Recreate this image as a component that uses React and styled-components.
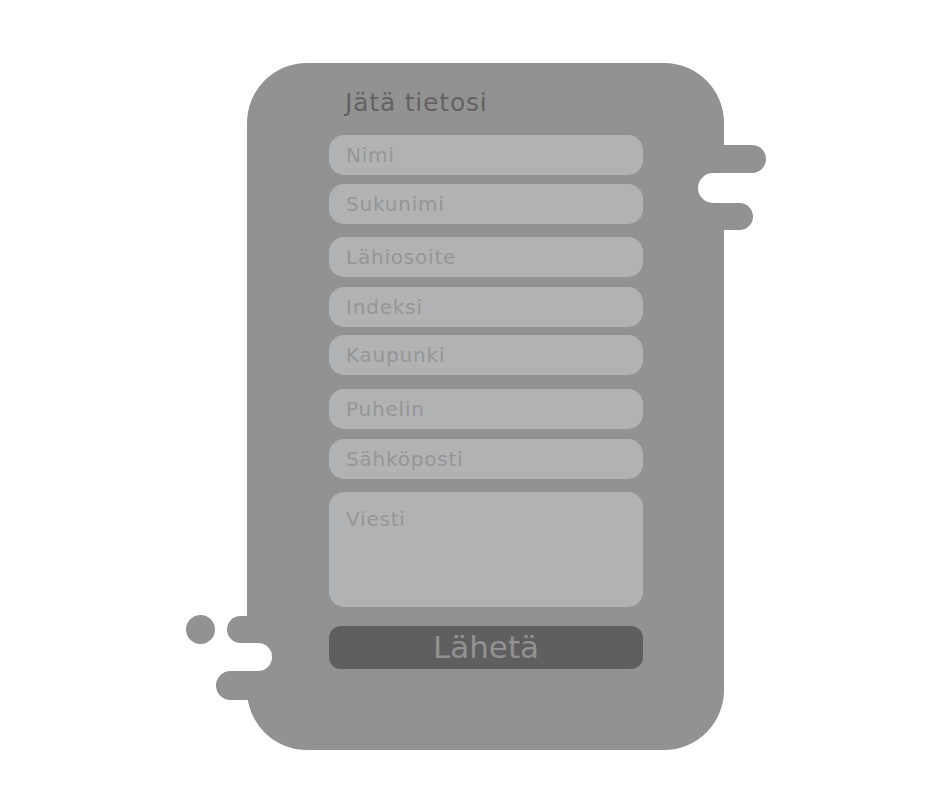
import React from 'react'
import styled, { createGlobalStyle } from 'styled-components'

const GlobalStyle = createGlobalStyle`
  body {
    margin: 0;
    background: #ffffff;
    font-family: "DejaVu Sans", "Liberation Sans", sans-serif;
  }
`

const Page = styled.div`
  padding: 63px 0 0 247px;
  min-height: 801px;
  box-sizing: border-box;
`

const Card = styled.form`
  position: relative;
  width: 477px;
  height: 687px;
  box-sizing: border-box;
  padding: 25px 0 0 82px;
  background: #929292;
  border-radius: 60px;
  display: flex;
  flex-direction: column;
`

// decorative bubbles sticking out of the card edges
const Bubbles = styled.svg`
  position: absolute;
  left: ${(p) => p.$x}px;
  top: ${(p) => p.$y}px;
  overflow: visible;
`

const Title = styled.h2`
  margin: 0 0 17px;
  padding-left: 16px;
  font-size: 25px;
  line-height: 30px;
  font-weight: 400;
  letter-spacing: 0.8px;
  color: #636363;
`

const Field = styled.input`
  display: block;
  width: 314px;
  height: 40px;
  margin: ${(p) => p.$mt || 0}px 0 0;
  padding: 0 17px;
  box-sizing: border-box;
  border: none;
  border-radius: 15px;
  background: #b1b2b3;
  font-family: "DejaVu Sans", "Liberation Sans", sans-serif;
  font-size: 20px;
  letter-spacing: 0.8px;
  color: #555555;
  outline: none;

  &::placeholder {
    color: #969696;
    opacity: 1;
  }
`

const Message = styled.textarea`
  display: block;
  width: 314px;
  height: 115px;
  margin-top: 13px;
  padding: 15px 17px 0;
  box-sizing: border-box;
  border: none;
  border-radius: 15px;
  background: #b1b2b3;
  font-family: "DejaVu Sans", "Liberation Sans", sans-serif;
  font-size: 20px;
  line-height: 24px;
  letter-spacing: 0.8px;
  color: #555555;
  resize: none;
  outline: none;

  &::placeholder {
    color: #969696;
    opacity: 1;
  }
`

const Submit = styled.button`
  width: 314px;
  height: 43px;
  margin-top: 19px;
  padding: 0;
  border: none;
  border-radius: 12px;
  background: #5f5f5f;
  color: #929292;
  font-family: "DejaVu Sans", "Liberation Sans", sans-serif;
  font-size: 31px;
  line-height: 43px;
  cursor: pointer;
`

const fields = [
  { name: 'Nimi', mt: 0 },
  { name: 'Sukunimi', mt: 9 },
  { name: 'Lähiosoite', mt: 13 },
  { name: 'Indeksi', mt: 10 },
  { name: 'Kaupunki', mt: 8 },
  { name: 'Puhelin', mt: 14 },
  { name: 'Sähköposti', mt: 10 },
]

export default function App() {
  return (
    <Page>
      <GlobalStyle />
      <Card onSubmit={(e) => e.preventDefault()}>
        <Bubbles $x={451} $y={82} width="68" height="85" viewBox="0 0 68 85">
          <rect x="2" y="0" width="66" height="28" rx="14" fill="#929292" />
          <rect x="0" y="28" width="50" height="30" rx="15" fill="#ffffff" />
          <rect x="2" y="58" width="53" height="27" rx="13.5" fill="#929292" />
        </Bubbles>
        <Bubbles $x={-61} $y={552} width="86" height="85" viewBox="0 0 86 85">
          <circle cx="14.5" cy="14.5" r="14.5" fill="#929292" />
          <rect x="41" y="1" width="40" height="27" rx="13.5" fill="#929292" />
          <rect x="44" y="28" width="42" height="28" rx="14" fill="#ffffff" />
          <rect x="30" y="56" width="44" height="29" rx="14.5" fill="#929292" />
        </Bubbles>

        <Title>Jätä tietosi</Title>
        {fields.map((f) => (
          <Field key={f.name} placeholder={f.name} $mt={f.mt} />
        ))}
        <Message placeholder="Viesti" />
        <Submit type="submit">Lähetä</Submit>
      </Card>
    </Page>
  )
}
